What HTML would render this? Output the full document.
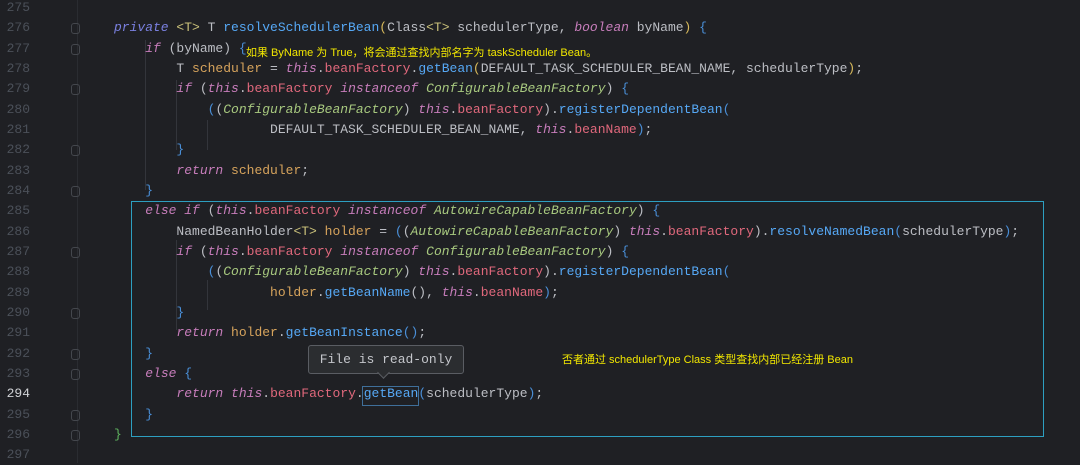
<!DOCTYPE html><html><head><meta charset="utf-8"><style>
body{margin:0;width:1080px;height:463px;background:#1f2024;overflow:hidden;position:relative;font-family:"Liberation Mono",monospace;font-size:13px}
.r{position:absolute;left:0;height:20px;line-height:20px;width:1080px}
.ln{position:absolute;left:0;width:30px;text-align:right;color:#4b5059}
.c{position:absolute;left:114px;white-space:pre;color:#bcbec4}
.k{color:#c77dbb;font-style:italic}.p{color:#7a80e0;font-style:italic}
.f{color:#e0687c}.m{color:#56a8f5}.g{color:#a8c97f;font-style:italic}.v{color:#d6a35c}
.y{color:#d7b95b}.b{color:#4a8fd8}.t{color:#c9c07a}
.note{position:absolute;color:#f2e700;font-family:"Liberation Sans","Noto Sans CJK SC",sans-serif;font-size:11px;white-space:pre}
.guide{position:absolute;width:1px;background:#33353b}
.fold{position:absolute;left:71px;top:5px;width:7px;height:9px;border:1px solid #44474d;border-radius:3px}
</style></head><body>
<div class="guide" style="left:145px;top:40px;height:150px"></div>
<div class="guide" style="left:176px;top:80px;height:70px"></div>
<div class="guide" style="left:207px;top:120px;height:30px"></div>
<div class="guide" style="left:176px;top:240px;height:90px"></div>
<div class="guide" style="left:207px;top:280px;height:30px"></div>
<div class="guide" style="left:77px;top:0;height:463px;background:#2a2c31"></div>
<div style="position:absolute;left:131px;top:201px;width:911px;height:234px;border:1px solid #2d9fc0"></div>

<div class="r" style="top:-2px"><span class="ln">275</span></div>
<div class="r" style="top:18.3px"><span class="ln">276</span><div class="fold"></div><span class="c"><span class="p">private</span> <span class="t">&lt;T&gt;</span> T <span class="m">resolveSchedulerBean</span><span class="y">(</span>Class<span class="t">&lt;T&gt;</span> schedulerType, <span class="k">boolean</span> byName<span class="y">)</span> <span class="b">{</span></span></div>
<div class="r" style="top:38.7px"><span class="ln">277</span><div class="fold"></div><span class="c">    <span class="k">if</span> (byName) <span class="b">{</span></span></div>
<div class="r" style="top:59px"><span class="ln">278</span><span class="c">        T <span class="v">scheduler</span> = <span class="k">this</span>.<span class="f">beanFactory</span>.<span class="m">getBean</span><span class="y">(</span>DEFAULT_TASK_SCHEDULER_BEAN_NAME, schedulerType<span class="y">)</span>;</span></div>
<div class="r" style="top:79.3px"><span class="ln">279</span><div class="fold"></div><span class="c">        <span class="k">if</span> (<span class="k">this</span>.<span class="f">beanFactory</span> <span class="k">instanceof</span> <span class="g">ConfigurableBeanFactory</span>) <span class="b">{</span></span></div>
<div class="r" style="top:99.7px"><span class="ln">280</span><span class="c">            <span class="b">(</span>(<span class="g">ConfigurableBeanFactory</span>) <span class="k">this</span>.<span class="f">beanFactory</span>).<span class="m">registerDependentBean</span><span class="b">(</span></span></div>
<div class="r" style="top:120px"><span class="ln">281</span><span class="c">                    DEFAULT_TASK_SCHEDULER_BEAN_NAME, <span class="k">this</span>.<span class="f">beanName</span><span class="b">)</span>;</span></div>
<div class="r" style="top:140.3px"><span class="ln">282</span><div class="fold"></div><span class="c">        <span class="b">}</span></span></div>
<div class="r" style="top:160.6px"><span class="ln">283</span><span class="c">        <span class="k">return</span> <span class="v">scheduler</span>;</span></div>
<div class="r" style="top:181px"><span class="ln">284</span><div class="fold"></div><span class="c">    <span class="b">}</span></span></div>
<div class="r" style="top:201.3px"><span class="ln">285</span><span class="c">    <span class="k">else if</span> (<span class="k">this</span>.<span class="f">beanFactory</span> <span class="k">instanceof</span> <span class="g">AutowireCapableBeanFactory</span>) <span class="b">{</span></span></div>
<div class="r" style="top:221.6px"><span class="ln">286</span><span class="c">        NamedBeanHolder<span class="t">&lt;T&gt;</span> <span class="v">holder</span> = <span class="b">(</span>(<span class="g">AutowireCapableBeanFactory</span>) <span class="k">this</span>.<span class="f">beanFactory</span>).<span class="m">resolveNamedBean</span><span class="b">(</span>schedulerType<span class="b">)</span>;</span></div>
<div class="r" style="top:242px"><span class="ln">287</span><div class="fold"></div><span class="c">        <span class="k">if</span> (<span class="k">this</span>.<span class="f">beanFactory</span> <span class="k">instanceof</span> <span class="g">ConfigurableBeanFactory</span>) <span class="b">{</span></span></div>
<div class="r" style="top:262.3px"><span class="ln">288</span><span class="c">            <span class="b">(</span>(<span class="g">ConfigurableBeanFactory</span>) <span class="k">this</span>.<span class="f">beanFactory</span>).<span class="m">registerDependentBean</span><span class="b">(</span></span></div>
<div class="r" style="top:282.6px"><span class="ln">289</span><span class="c">                    <span class="v">holder</span>.<span class="m">getBeanName</span>(), <span class="k">this</span>.<span class="f">beanName</span><span class="b">)</span>;</span></div>
<div class="r" style="top:303px"><span class="ln">290</span><div class="fold"></div><span class="c">        <span class="b">}</span></span></div>
<div class="r" style="top:323.3px"><span class="ln">291</span><span class="c">        <span class="k">return</span> <span class="v">holder</span>.<span class="m">getBeanInstance</span><span class="b">()</span>;</span></div>
<div class="r" style="top:343.6px"><span class="ln">292</span><div class="fold"></div><span class="c">    <span class="b">}</span></span></div>
<div class="r" style="top:364px"><span class="ln">293</span><div class="fold"></div><span class="c">    <span class="k">else</span> <span class="b">{</span></span></div>
<div class="r" style="top:384.3px"><span class="ln" style="color:#d0d2d6">294</span><span class="c">        <span class="k">return</span> <span class="k">this</span>.<span class="f">beanFactory</span>.<span class="m">getBean</span><span class="b">(</span>schedulerType<span class="b">)</span>;</span></div>
<div class="r" style="top:404.6px"><span class="ln">295</span><div class="fold"></div><span class="c">    <span class="b">}</span></span></div>
<div class="r" style="top:425px"><span class="ln">296</span><div class="fold"></div><span class="c"><span style="color:#5fb35f">}</span></span></div>
<div class="r" style="top:445.3px"><span class="ln">297</span></div>

<div style="position:absolute;left:308px;top:345px;width:154px;height:27px;border:1px solid #5a5d63;border-radius:3px;background:#2b2d30;color:#c4c6cb;line-height:27px;text-align:center;font-size:13px">File is read-only</div>
<div style="position:absolute;left:379px;top:368px;width:8px;height:8px;background:#2b2d30;border-right:1px solid #5a5d63;border-bottom:1px solid #5a5d63;transform:rotate(45deg)"></div>
<div style="position:absolute;left:362px;top:386px;width:55px;height:18px;border:1px solid #3f6f9a"></div>
<div class="note" style="left:246px;top:44px">如果 ByName 为 True，将会通过查找内部名字为 taskScheduler Bean。</div>
<div class="note" style="left:562px;top:351px">否者通过 schedulerType Class 类型查找内部已经注册 Bean</div>
</body></html>
